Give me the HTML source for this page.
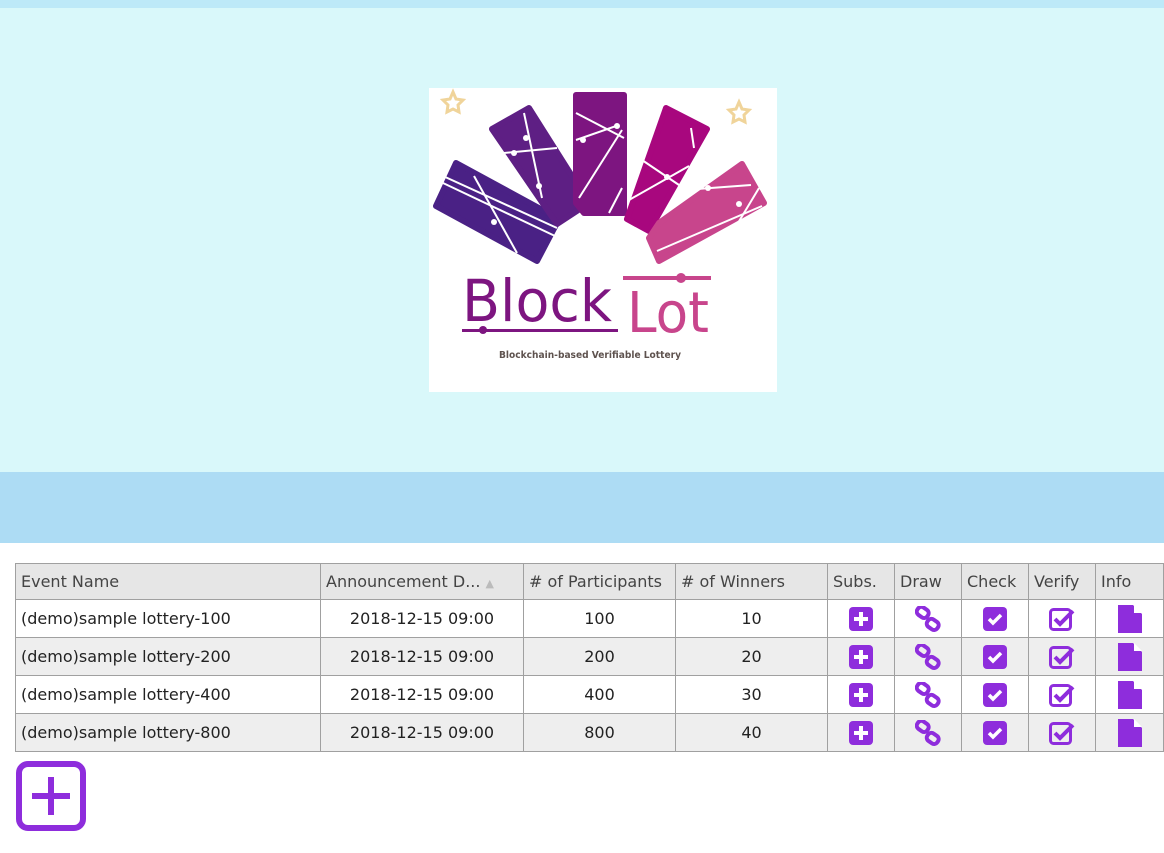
<!DOCTYPE html>
<html><head><style>
body{margin:0;width:1164px;height:853px;background:#fff;font-family:"Liberation Sans",sans-serif;position:relative;overflow:hidden}
.top{position:absolute;left:0;top:0;width:1164px;height:8px;background:#bde9f8}
.hero{position:absolute;left:0;top:8px;width:1164px;height:464px;background:#d9f8fa}
.band{position:absolute;left:0;top:472px;width:1164px;height:71px;background:#addcf4}
.logo{position:absolute;left:429px;top:88px;width:348px;height:304px;background:#fff}
table{position:absolute;left:15px;top:563px;border-collapse:collapse;font-size:16px;color:#222;font-family:"DejaVu Sans",sans-serif;table-layout:fixed}
td,th{border:1px solid #a0a0a0;height:37px;padding:0 5px;white-space:nowrap;overflow:hidden}
th{background:#e6e6e6;font-weight:normal;text-align:left;color:#444;height:35px}
tr.g td{background:#eee}
td{text-align:center}
td.l{text-align:left}
.add{position:absolute;left:16px;top:761px;width:58px;height:58px;border:6px solid #8e2ddc;border-radius:12px;box-sizing:content-box}
</style></head><body>
<div class="top"></div><div class="hero"></div><div class="band"></div>
<div class="logo">
<svg width="348" height="304" viewBox="0 0 348 304">
<g stroke-linejoin="round" stroke-width="6">
<polygon points="7,118 27,75 130,131 108,173" fill="#4a2185" stroke="#4a2185"/>
<polygon points="63,41 100,20 160,115 128,136" fill="#5e1f84" stroke="#5e1f84"/>
<polygon points="147,7 195,7 195,125 155,125 147,115" fill="#7d1580" stroke="#7d1580"/>
<polygon points="237,20 278,41 220,143 198,131" fill="#a8077e" stroke="#a8077e"/>
<polygon points="220,150 230,135 313,76 335,115 230,173" fill="#c8458c" stroke="#c8458c"/>
</g>
<g stroke="#fff" stroke-width="2" fill="none">
<line x1="14" y1="88" x2="128" y2="140"/><line x1="14" y1="95" x2="126" y2="148"/><line x1="45" y1="88" x2="88" y2="165"/>
<line x1="75" y1="65" x2="128" y2="60"/><line x1="95" y1="25" x2="113" y2="110"/>
<line x1="147" y1="25" x2="195" y2="50"/><line x1="147" y1="52" x2="190" y2="37"/><line x1="150" y1="110" x2="193" y2="42"/><line x1="180" y1="125" x2="193" y2="100"/>
<line x1="200" y1="112" x2="260" y2="78"/><line x1="213" y1="72" x2="250" y2="97"/><line x1="262" y1="40" x2="265" y2="60"/>
<line x1="228" y1="163" x2="333" y2="118"/><line x1="255" y1="102" x2="322" y2="97"/><line x1="300" y1="150" x2="330" y2="100"/>
</g>
<g fill="#fff"><circle cx="65" cy="134" r="3"/><circle cx="97" cy="50" r="3"/><circle cx="85" cy="65" r="3"/><circle cx="110" cy="98" r="3"/><circle cx="154" cy="52" r="3"/><circle cx="188" cy="38" r="3"/><circle cx="238" cy="89" r="3"/><circle cx="279" cy="100" r="3"/><circle cx="310" cy="116" r="3"/></g>
<path d="M24 4l3 7 7 1-5 5 1 7-6-3-6 3 1-7-5-5 7-1z" fill="none" stroke="#f0d49a" stroke-width="3"/>
<path d="M310 14l3 7 7 1-5 5 1 7-6-3-6 3 1-7-5-5 7-1z" fill="none" stroke="#f0d49a" stroke-width="3"/>
<text x="33" y="233" font-size="58" fill="#7d1580" font-family="DejaVu Sans" textLength="150" lengthAdjust="spacingAndGlyphs">Block</text>
<text x="198" y="244" font-size="56" fill="#c8458c" font-family="DejaVu Sans" textLength="82" lengthAdjust="spacingAndGlyphs">Lot</text>
<rect x="33" y="241" width="156" height="3" fill="#7d1580"/><circle cx="54" cy="242" r="4" fill="#7d1580"/>
<rect x="194" y="188" width="88" height="4" fill="#c8458c"/><circle cx="252" cy="190" r="5" fill="#c8458c"/>
<text x="70" y="270" font-size="10" fill="#5e524e" font-weight="bold" font-family="DejaVu Sans" textLength="182" lengthAdjust="spacingAndGlyphs">Blockchain-based Verifiable Lottery</text>
</svg></div>
<table>
<colgroup><col style="width:305px"><col style="width:203px"><col style="width:152px"><col style="width:152px"><col style="width:67px"><col style="width:67px"><col style="width:67px"><col style="width:67px"><col style="width:68px"></colgroup>
<tr><th>Event Name</th><th>Announcement D... <span style="color:#bbb;font-size:11px">▲</span></th><th>#&nbsp;of Participants</th><th># of Winners</th><th>Subs.</th><th>Draw</th><th>Check</th><th>Verify</th><th>Info</th></tr>
<tr><td class="l">(demo)sample lottery-100</td><td>2018-12-15 09:00</td><td>100</td><td>10</td><td>I1</td><td>I2</td><td>I3</td><td>I4</td><td>I5</td></tr>
<tr class="g"><td class="l">(demo)sample lottery-200</td><td>2018-12-15 09:00</td><td>200</td><td>20</td><td>I1</td><td>I2</td><td>I3</td><td>I4</td><td>I5</td></tr>
<tr><td class="l">(demo)sample lottery-400</td><td>2018-12-15 09:00</td><td>400</td><td>30</td><td>I1</td><td>I2</td><td>I3</td><td>I4</td><td>I5</td></tr>
<tr class="g"><td class="l">(demo)sample lottery-800</td><td>2018-12-15 09:00</td><td>800</td><td>40</td><td>I1</td><td>I2</td><td>I3</td><td>I4</td><td>I5</td></tr>
</table>
<div class="add"><svg width="58" height="58"><path d="M29 10v38M10 29h38" stroke="#8e2ddc" stroke-width="6"/></svg></div>
<script>
var ic={I1:'<svg width="24" height="24"><rect width="24" height="24" rx="4" fill="#8e2ddc"/><path d="M12 5v14M5 12h14" stroke="#fff" stroke-width="4"/></svg>',
I2:'<svg width="26" height="26"><g fill="none" stroke="#8e2ddc" stroke-width="4"><rect x="2" y="2" width="12" height="9" rx="4" transform="rotate(35 8 6)"/><rect x="12" y="14" width="12" height="9" rx="4" transform="rotate(35 18 18)"/></g></svg>',
I3:'<svg width="24" height="24"><rect width="24" height="24" rx="4" fill="#8e2ddc"/><path d="M6 12l4 4 8-8" stroke="#fff" stroke-width="3.5" fill="none"/></svg>',
I4:'<svg width="26" height="24"><rect x="1.5" y="2.5" width="20" height="20" rx="3" fill="none" stroke="#8e2ddc" stroke-width="3"/><path d="M6 12l5 5 13-13" stroke="#8e2ddc" stroke-width="4" fill="none"/></svg>',
I5:'<svg width="24" height="28"><path d="M0 0h15l9 9v19H0z" fill="#8e2ddc"/><path d="M16 0v8h8" fill="#fff"/></svg>'};
document.querySelectorAll('td').forEach(function(t){if(ic[t.textContent]){t.innerHTML=ic[t.textContent];t.style.lineHeight='0';}});
</script>
</body></html>
